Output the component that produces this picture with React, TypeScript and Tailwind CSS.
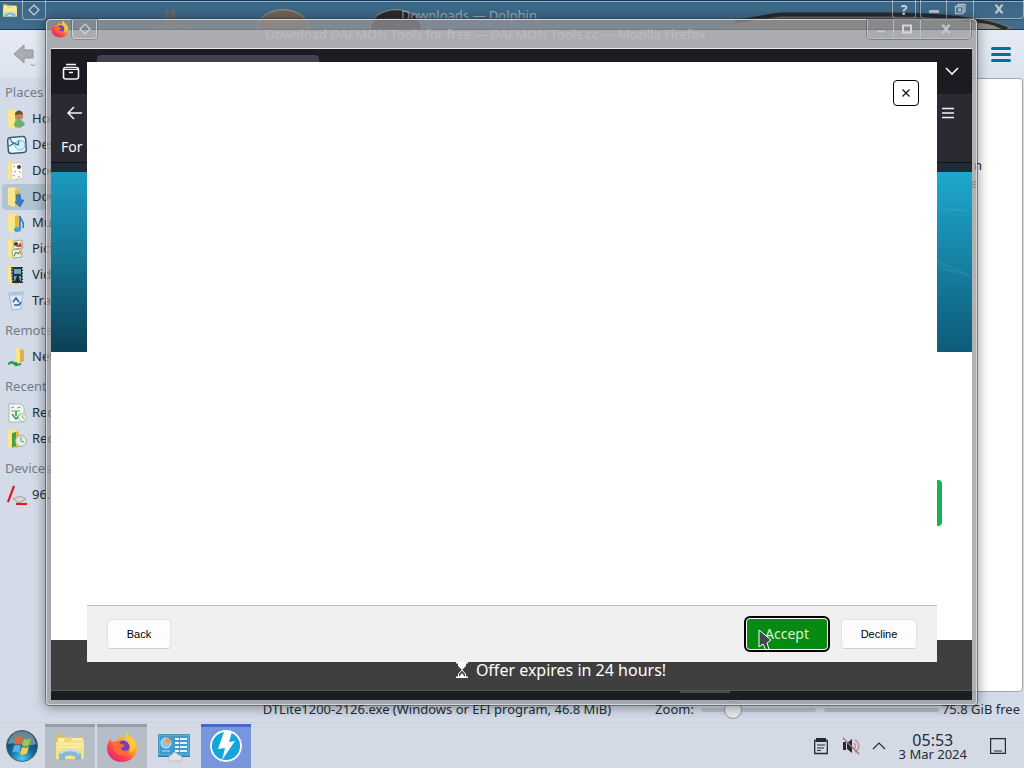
import React from "react";

type PlaceKind =
  | "home" | "desktop" | "documents" | "downloads" | "music" | "pictures"
  | "videos" | "trash" | "network" | "recentFiles" | "recentPlaces" | "disk";

const sections: { title: string; items: { label: string; kind: PlaceKind; active?: boolean }[] }[] = [
  {
    title: "Places",
    items: [
      { label: "Home", kind: "home" },
      { label: "Desktop", kind: "desktop" },
      { label: "Documents", kind: "documents" },
      { label: "Downloads", kind: "downloads", active: true },
      { label: "Music", kind: "music" },
      { label: "Pictures", kind: "pictures" },
      { label: "Videos", kind: "videos" },
      { label: "Trash", kind: "trash" },
    ],
  },
  { title: "Remote", items: [{ label: "Network", kind: "network" }] },
  {
    title: "Recent",
    items: [
      { label: "Recent Files", kind: "recentFiles" },
      { label: "Recent Locations", kind: "recentPlaces" },
    ],
  },
  { title: "Devices", items: [{ label: "96.0 GiB", kind: "disk" }] },
];

function FolderBase() {
  return (
    <g>
      <path d="M1 1h6l2 2v16l-8-1z" fill="#eec95c" />
      <path d="M1 1l4-1 6 2v16l-3 2-7-2z" fill="#fae68c" />
      <path d="M8 3l4-1v16l-4 2z" fill="#e2b84c" />
    </g>
  );
}

function PlaceIcon({ kind }: { kind: PlaceKind }) {
  return (
    <svg viewBox="0 0 20 20" className="h-5 w-5 shrink-0" aria-hidden="true">
      {kind === "home" && (
        <g><FolderBase /><path d="M7 17c0-8 9-8 11-1l-5 3z" fill="#6fae77" /><circle cx="12" cy="7" r="4" fill="#b98a5c" /><path d="M8 6c0-6 8-6 8 0l-2-1z" fill="#6d4b2e" /></g>
      )}
      {kind === "desktop" && (
        <g><rect x="1" y="2" width="18" height="16" rx="3" fill="#edf6fb" stroke="#385d7a" strokeWidth="1.500" transform="rotate(-4 10 10)" /><circle cx="13" cy="10" r="5" fill="#d5edfa" stroke="#7fb4d2" /><path d="M2 2l4 7-4 2M5 7l6 3 1-4" stroke="#2c72a3" fill="none" strokeWidth="1.300" /></g>
      )}
      {kind === "documents" && (
        <g><FolderBase /><path d="M4 2h11l1 15-11 2z" fill="#fbfbfb" stroke="#c9c1b9" strokeWidth=".7" /><circle cx="12" cy="6" r="2" fill="#444" /><path d="M6 5l2 1M7 10l2 1m3-1 2 2M6 14l2 1m3 0 2 1" stroke="#d08c8c" /></g>
      )}
      {kind === "downloads" && (
        <g><FolderBase /><path d="M9 8l4-1 1 6h3l-4 7-5-5 2-1z" fill="#2e83cf" stroke="#1e5d9b" strokeWidth=".6" /></g>
      )}
      {kind === "music" && (
        <g><FolderBase /><path d="M13 3v13M13 3c0 4 5 5 3 12" stroke="#2379bc" strokeWidth="1.500" fill="none" /><ellipse cx="10.500" cy="16.500" rx="3.500" ry="2.500" fill="#45a2dd" /></g>
      )}
      {kind === "pictures" && (
        <g><FolderBase /><path d="M6 2l9-1 1 8-9 1z" fill="#f5efe1" stroke="#927e5e" strokeWidth=".6" /><circle cx="9" cy="5" r="2" fill="#2b4935" /><path d="M9 8l5-5 1 5z" fill="#c74f38" /><path d="M5 11l9-1 1 8-9 1z" fill="#e8f1e0" stroke="#70886b" strokeWidth=".6" /><path d="M7 17l2-4 2 2 2-3" stroke="#486850" fill="none" /><circle cx="14" cy="14" r="1.500" fill="#ddb234" /></g>
      )}
      {kind === "videos" && (
        <g><FolderBase /><path d="M4 2h12v16H5z" fill="#28313d" /><path d="M7 4h7v5H7zM7 11h7v5H7z" fill="#6ea6c4" /><path d="M5 3v15M15.500 3v14" stroke="#d7dfe5" strokeDasharray="1.500 1.500" /><path d="M8 16l3-8 2 8z" fill="#172935" /></g>
      )}
      {kind === "trash" && (
        <g><path d="M2 2l14-1-2 17-9 1z" fill="#dce9f6" stroke="#8fa7bf" strokeWidth=".7" /><path d="M1 3l15-2v3L2 5z" fill="#a8c8e6" /><path d="M6 11l3-4 3 4m-5 3h5l2-3" stroke="#315fa3" strokeWidth="1.600" fill="none" /></g>
      )}
      {kind === "network" && (
        <g><path d="M9 1l4 1v13l-4 2z" fill="#fae68c" /><path d="M13 2l4 1v11l-4 2z" fill="#deb247" /><path d="M1 17l4-2 4 3 5-1M9 15v4" stroke="#249a55" strokeWidth="2.200" fill="none" /></g>
      )}
      {kind === "recentFiles" && (
        <g><path d="M2 1h12l3 3v15H2z" fill="#f4faf4" stroke="#9aaba1" strokeWidth=".8" /><path d="M4 5l3-1m3 1 4-1M4 8h9" stroke="#7c9c80" /><path d="M9 8v5M5 11l4 5 5-5" stroke="#45a45b" strokeWidth="1.800" fill="none" /><circle cx="15.500" cy="14.500" r="4" fill="#edf5ed" stroke="#9caf9f" strokeWidth=".8" /><path d="M15.500 12v3h2" stroke="#7f947f" strokeWidth=".8" fill="none" /></g>
      )}
      {kind === "recentPlaces" && (
        <g><FolderBase /><path d="M5 4l4-1v14l-4 2z" fill="#4c9b45" /><circle cx="14" cy="12" r="5.500" fill="#e1eee0" stroke="#9db3a1" /><path d="M14 8v4l3 1" stroke="#70907a" fill="none" /></g>
      )}
      {kind === "disk" && (
        <g><path d="M6 14l7-3 6 3-7 4z" fill="#d4d6d8" stroke="#888b8f" strokeWidth=".7" /><path d="M7 1L1 17" stroke="#e01824" strokeWidth="2.200" /><path d="M9 19h11" stroke="#e01824" strokeWidth="2.200" /></g>
      )}
    </svg>
  );
}

function FirefoxLogo({ className }: { className: string }) {
  return (
    <svg viewBox="0 0 32 32" className={className} aria-hidden="true">
      <defs>
        <linearGradient id="fx" x1=".85" y1=".1" x2=".2" y2=".9">
          <stop offset="0" stopColor="#ffe443" /><stop offset=".4" stopColor="#ffa02b" />
          <stop offset=".7" stopColor="#ff4a45" /><stop offset="1" stopColor="#e52a6e" />
        </linearGradient>
      </defs>
      <path d="M5 7c0 2 0 3 1 4l4-1c1-2 3-4 6-5 0 2 1 3 3 3 1-3 1-5 2-7 1 4 4 5 6 8l2 1c2 3 2 6 2 8-1 8-7 13-15 13C7 31 1 25 1 17 1 13 3 10 5 7z" fill="url(#fx)" />
      <circle cx="17" cy="16" r="6.500" fill="#6f3fc4" />
      <path d="M7 12c3-2 6-1 8 1l4 1c-1 2-3 2-4 3 0 3 5 4 8 1 0 4-3 6-7 6-6 0-10-6-9-12z" fill="#ff6a35" />
      <path d="M19 8c6 3 7 9 4 14 6-3 8-9 5-13-2-3-5-4-6-7-3 2-2 4-3 6z" fill="#ffc83a" />
    </svg>
  );
}

function FilesLogo({ className }: { className: string }) {
  return (
    <svg viewBox="0 0 32 32" className={className} aria-hidden="true">
      <path d="M2 3l6-1 4 3h17v22H2z" fill="#e0c05a" />
      <path d="M4 6h25v9H4z" fill="#f9efb5" />
      <path d="M11 5h7v3h9v4H9z" fill="#ecd27c" />
      <path d="M2 10h13l3-2h12v19H2z" fill="#f4e28b" />
      <path d="M4 12h24M3 15h27" stroke="#fff5c0" />
      <path d="M5 28v-5c0-7 22-7 22 0v5h-6v-3c0-2-10-2-10 0v3z" fill="#86b9cf" />
      <path d="M7 22c1-5 17-5 18 0" stroke="#c3e2ed" strokeWidth="2" fill="none" />
    </svg>
  );
}

function StartLogo() {
  return (
    <svg viewBox="0 0 32 32" className="h-8 w-8" aria-hidden="true">
      <defs>
        <radialGradient id="orb" cx=".5" cy=".9" r=".85">
          <stop offset="0" stopColor="#45d0f4" /><stop offset=".45" stopColor="#13689b" /><stop offset="1" stopColor="#183953" />
        </radialGradient>
      </defs>
      <circle cx="16" cy="16" r="15.500" fill="url(#orb)" stroke="#4e6570" />
      <path d="M2 14C4-3 28-3 30 14 20 18 11 11 2 14z" fill="#b8ced3" opacity=".5" />
      <path d="M10 8c3-2 5-1 7 0l-2 7c-2-1-4-2-7 0z" fill="#ee6531" />
      <path d="M18 9c3 1 5 1 7-1l-2 7c-2 2-4 2-7 1z" fill="#9cc945" />
      <path d="M8 16c3-2 5-1 7 0l-2 7c-2-1-4-2-7 0z" fill="#5cb0e4" />
      <path d="M16 17c3 1 5 1 7-1l-2 7c-2 2-4 2-7 1z" fill="#f8cd47" />
    </svg>
  );
}

function SettingsLogo() {
  return (
    <svg viewBox="0 0 34 32" className="h-8 w-9" aria-hidden="true">
      <rect x="1" y="4" width="32" height="23" rx="1" fill="#287cad" />
      <rect x="2" y="5" width="30" height="20" fill="#3f9bcd" stroke="#8cc8e4" strokeWidth=".7" />
      <circle cx="9" cy="13" r="5" fill="#8cc6e5" stroke="#dceef7" />
      <path d="M9 13V7a6 6 0 0 1 5 6z" fill="#f49a4a" />
      <path d="M18 9h4m1 0h7m-12 4h4m1 0h7m-12 4h4m1 0h7m-12 4h4m1 0h7" stroke="#e2f3fb" strokeWidth="2" />
      <path d="M5 21h8" stroke="#b9e1f1" />
      <path d="M12 30c-2-4 2-5 3-5 1-4 5-3 6 0 4 0 5 3 3 6H13z" fill="#e2e2e3" stroke="#a3a9ad" strokeWidth=".6" />
    </svg>
  );
}

function BoltLogo() {
  return (
    <svg viewBox="0 0 32 32" className="h-8 w-8" aria-hidden="true">
      <circle cx="16" cy="16" r="15" fill="#14a5dd" stroke="#fff" strokeWidth="1.800" />
      <path d="M14 2h8l-3 10 6-1-13 19 3-12-7 1z" fill="#fff" />
    </svg>
  );
}

function Diamond() {
  return (
    <svg viewBox="0 0 12 12" className="h-3 w-3" aria-hidden="true">
      <path d="M6 1l5 5-5 5-5-5z" fill="none" stroke="#cdd4da" strokeWidth="1.200" />
    </svg>
  );
}

const frameButton = "flex items-center justify-center border-r border-[#c2cbd3]/70 last:border-r-0";

function WindowButtons({ restore }: { restore?: boolean }) {
  return (
    <div className="flex h-[19px] w-[104px] rounded-b border border-t-0 border-[#c2cbd3]/70 shadow-[0_0_0_1px_rgba(30,45,60,0.35)]">
      <button aria-label="Minimize" className={`${frameButton} w-[26px]`}>
        <svg viewBox="0 0 12 12" className="mt-1 h-3 w-3"><path d="M1 5h10v3H1z" fill="#c3c9ce" stroke="#74808a" strokeWidth=".5" /></svg>
      </button>
      <button aria-label={restore ? "Restore" : "Maximize"} className={`${frameButton} w-[27px]`}>
        <svg viewBox="0 0 12 12" className="h-3 w-3">
          {restore ? (
            <path d="M4 3V1.500h7v7H9.500M1.500 3.500h7.500v7H1.500zM4.500 6h2v2h-2z" fill="none" stroke="#b5c1cb" strokeWidth="1.300" />
          ) : (
            <path d="M2 2.500h8v7H2z" fill="none" stroke="#d3d6d8" strokeWidth="2" />
          )}
        </svg>
      </button>
      <button aria-label="Close" className={`${frameButton} flex-1`}>
        <svg viewBox="0 0 12 12" className="h-3 w-3"><path d="M2 2h2l2 3 2-3h2L7 6l3 4H8L6 7l-2 3H2l3-4z" fill="#b9c0c5" stroke="#cdd2d6" strokeWidth=".8" /></svg>
      </button>
    </div>
  );
}

function FileManager() {
  return (
    <section className="flex flex-1 flex-col bg-[#d3dbe8] text-[13px] text-[#232b35]">
      <header className="relative flex h-[30px] items-start justify-between overflow-hidden border-b border-[#1b3856] bg-gradient-to-b from-[#3b6888] to-[#426c8c] shadow-[inset_0_1px_0_#16375b,inset_0_2px_0_#8fb0c6]">
        <svg viewBox="0 0 1024 30" className="absolute inset-0 h-full w-full" preserveAspectRatio="none" aria-hidden="true">
          <ellipse cx="283" cy="30" rx="26" ry="20" fill="#75655a" stroke="#a29688" />
          <ellipse cx="396" cy="30" rx="26" ry="20" fill="#2b2b30" stroke="#9a9184" />
          <path d="M167 28V10m6 18V10m-22 19c10-4 30-4 40 0" stroke="#75695a" strokeWidth="3" fill="none" />
          <path d="M712 30c20-4 50-13 75-15 60-3 150 0 180 2 25 2 40 8 49 13z" fill="#6d6b68" />
          <path d="M735 22c20-2 30-5 45-7h110c50 0 90 4 117 15" stroke="#272b31" strokeWidth="4" fill="none" />
          <path d="M978 24c9 0 17 2 23 6h-23z" fill="#8d8780" />
        </svg>
        <div className="relative flex gap-1">
          <FilesLogo className="mt-[3px] ml-0.5 h-4 w-4" />
          <button aria-label="Window menu" className="flex h-5 w-[24px] items-center justify-center rounded-b border border-t-0 border-[#c2cbd3]/70">
            <Diamond />
          </button>
        </div>
        <h1 className="absolute inset-x-0 top-[5px] pr-[86px] text-center text-[13px] leading-5 text-[#c4cbd2]/70">Downloads — Dolphin</h1>
        <div className="relative flex gap-1">
          <button aria-label="Help" className="h-[19px] w-[24px] rounded-b border border-t-0 border-[#c2cbd3]/70 text-[14px] leading-5 font-bold text-[#ccd4db]">?</button>
          <WindowButtons restore />
        </div>
      </header>
      <div className="flex h-[48px] items-center justify-between bg-gradient-to-b from-[#e6ebf5] to-[#dce3ef] pr-[13px] pl-3">
        <button aria-label="Back">
          <svg viewBox="0 0 26 28" className="h-7 w-[26px]">
            <path d="M2 14L12 5v5h9v8h-9v5z" fill="#a8adb1" stroke="#8f9499" />
            <path d="M19 24l2 2 2-2" fill="none" stroke="#969ba2" />
          </svg>
        </button>
        <button aria-label="Open menu" className="flex flex-col gap-[3px]">
          <span className="h-[3px] w-5 rounded bg-[#0b6c9f]" />
          <span className="h-[3px] w-5 rounded bg-[#0b6c9f]" />
          <span className="h-[3px] w-5 rounded bg-[#0b6c9f]" />
        </button>
      </div>
      <div className="flex flex-1">
        <nav className="-mt-0.5 w-[150px]">
          {sections.map((s) => (
            <div key={s.title}>
              <h2 className="flex h-[30px] items-center pt-1 pl-[5px] text-[#737c87]">{s.title}</h2>
              <ul>
                {s.items.map((it) => (
                  <li key={it.label} className={it.active ? "ml-0.5 rounded-l bg-[#b3c3cf]" : "ml-0.5"}>
                    <a href="#" className="flex h-[26px] items-center gap-[5px] pl-[5px] whitespace-nowrap">
                      <PlaceIcon kind={it.kind} />
                      {it.label}
                    </a>
                  </li>
                ))}
              </ul>
            </div>
          ))}
        </nav>
        <main className="mr-px flex flex-1 flex-col items-end rounded-sm border border-[#a1a8b1] bg-white pt-[77px] pr-[40px] leading-[18px]">
          <p>n</p>
          <p className="pr-1 text-[#777]">e</p>
        </main>
      </div>
      <footer className="flex h-[30px] items-center justify-end pt-1.5 pr-1">
        <p className="mr-11 whitespace-nowrap">DTLite1200-2126.exe (Windows or EFI program, 46.8 MiB)</p>
        <label htmlFor="zoom" className="mr-[7px]">Zoom:</label>
        <input
          id="zoom"
          type="range"
          defaultValue={24}
          className="mr-2 h-5 w-[115px] appearance-none bg-transparent [&::-webkit-slider-runnable-track]:h-1 [&::-webkit-slider-runnable-track]:rounded [&::-webkit-slider-runnable-track]:bg-[#b8c0cb] [&::-webkit-slider-thumb]:-mt-[7px] [&::-webkit-slider-thumb]:h-[18px] [&::-webkit-slider-thumb]:w-[18px] [&::-webkit-slider-thumb]:appearance-none [&::-webkit-slider-thumb]:rounded-full [&::-webkit-slider-thumb]:border [&::-webkit-slider-thumb]:border-[#8d949e] [&::-webkit-slider-thumb]:bg-[#e6e8eb]"
        />
        <div className="mr-[3px] h-1 w-[115px] rounded bg-[#b4bcc8]" />
        <span className="whitespace-nowrap">75.8 GiB free</span>
      </footer>
    </section>
  );
}

function Browser() {
  return (
    <section className="absolute top-[19px] right-[47px] bottom-[63px] left-[46px] flex flex-col rounded border border-[#d4d6d9] bg-[rgba(150,148,149,0.72)] px-1 pb-1 shadow-[0_0_0_1px_rgba(50,58,68,0.55),0_1px_12px_2px_rgba(0,0,0,0.35)]">
      <header className="relative flex h-[28px] shrink-0 items-start justify-between">
        <div className="flex gap-[3px]">
          <FirefoxLogo className="h-[18px] w-[18px]" />
          <button aria-label="Window menu" className="flex h-[19px] w-[25px] items-center justify-center rounded-b border border-t-0 border-[#d6dadd]/80 shadow-[0_0_0_1px_rgba(50,58,68,0.3)]">
            <Diamond />
          </button>
        </div>
        <h2 className="pointer-events-none absolute inset-x-0 top-1 pr-[52px] text-center text-[13px] leading-5 text-[#c4c6c8]/60">
          Download DAEMON Tools for free — DAEMON Tools.cc — Mozilla Firefox
        </h2>
        <div className="pr-px"><WindowButtons /></div>
      </header>
      <div className="flex flex-1 flex-col border-t border-[#e9eaec] bg-white">
        <div className="flex h-[45px] items-center justify-between bg-[#1c1b22] pr-[13px] pl-[11px] text-[#f4f4f6]">
          <button aria-label="Recent browsing">
            <svg viewBox="0 0 18 18" className="h-[18px] w-[18px]" fill="none" stroke="currentColor" strokeWidth="1.600">
              <path d="M4 1.500h10M1.500 7c0-1.500 1-2.500 2.500-2.500h10c1.500 0 2.500 1 2.500 2.500v7c0 1.500-1 2-2.500 2H4c-1.500 0-2.500-.5-2.500-2zM7 9.500h4" />
              <path d="M2 6.500h14" strokeWidth="1" />
            </svg>
          </button>
          <div className="mt-1 mr-auto ml-[17px] h-[37px] w-[222px] rounded bg-[#42414d]" />
          <button aria-label="List all tabs">
            <svg viewBox="0 0 14 14" className="h-[14px] w-[14px]" fill="none" stroke="currentColor" strokeWidth="1.600"><path d="M1 3l6 6 6-6" /></svg>
          </button>
        </div>
        <div className="flex h-[69px] flex-col border-b border-[#101015] bg-[#2b2a33] text-[#f4f4f6]">
          <div className="flex h-[38px] items-center justify-between pr-[17px] pl-4">
            <button aria-label="Go back">
              <svg viewBox="0 0 16 14" className="h-[14px] w-4" fill="none" stroke="currentColor" strokeWidth="1.500"><path d="M7 1L1 7l6 6M1 7h14" /></svg>
            </button>
            <button aria-label="Application menu">
              <svg viewBox="0 0 14 12" className="h-3 w-[14px]" stroke="currentColor" strokeWidth="1.400"><path d="M1 1.500h12M1 6h12M1 10.500h12" /></svg>
            </button>
          </div>
          <p className="pl-[10px] text-[14px] leading-[30px]">For</p>
        </div>
        <div className="h-[9px] bg-[#1e2c37]" />
        <div className="flex h-[180px] justify-between overflow-hidden bg-gradient-to-b from-[#1ea9cf] to-[#0e5b79]">
          <div className="h-full w-9 bg-gradient-to-b from-[#1b9ac0] via-[#15718f] to-[#0c4156]" />
          <svg viewBox="0 0 36 180" className="h-full w-9" fill="none" stroke="#5fc5da" strokeOpacity=".14" strokeWidth="2" aria-hidden="true">
            <path d="M1 35c12 6 20-1 34 6M2 89c11 6 22 8 33 16M3 94c9 7 20 4 30 10" />
          </svg>
        </div>
        <div className="flex flex-1 items-center justify-end pt-[13px] pr-[30px]">
          <div className="h-[46px] w-40 rounded bg-[#17b254]" />
        </div>
        <div className="flex h-[51px] items-center justify-center gap-2 border-b border-[#555] bg-[#3f3f3f] pt-[10px] pl-[99px] text-[16px] text-white">
          <svg viewBox="0 0 12 16" className="h-4 w-3" aria-hidden="true">
            <path d="M0 .7h12M0 15.300h12" stroke="#fff" strokeWidth="1.400" />
            <path d="M2 1h8v3L6 8 2 4z" fill="#fff" />
            <path d="M2.500 15v-3L6 8l3.500 4v3" fill="none" stroke="#fff" />
            <path d="M3 15l3-4 3 4z" fill="#fff" />
          </svg>
          <p>Offer expires in 24 hours!</p>
        </div>
        <div className="flex h-[9px] bg-[#1b1e21] pl-[629px]">
          <div className="h-0.5 w-[50px] bg-[#4b4d50]" />
        </div>
      </div>
    </section>
  );
}

function Installer() {
  return (
    <section role="dialog" aria-label="Installer" className="absolute top-[62px] right-[87px] bottom-[106px] left-[87px] flex flex-col bg-white font-['Liberation_Sans',sans-serif] text-[11px] text-black">
      <div className="flex flex-1 items-start justify-end pt-[18px] pr-[18px]">
        <button aria-label="Close installer" className="flex h-[26px] w-[26px] items-center justify-center rounded border border-black bg-white">
          <svg viewBox="0 0 8 8" className="h-2 w-2"><path d="M.5.5l7 7m0-7l-7 7" stroke="#111" strokeWidth="1.200" /></svg>
        </button>
      </div>
      <footer className="flex h-[57px] items-center border-t border-[#bdbdbd] bg-[#f0f0f0] px-5">
        <button className="mr-auto h-[30px] w-[64px] rounded border border-[#e2e2e2] border-b-[#cfcfcf] bg-[#fdfdfd]">Back</button>
        <button className="mr-[11px] h-9 w-[86px] rounded-md border-2 border-black bg-[#078a12] font-['Noto_Sans',sans-serif] text-[14px] leading-4 text-[#d5f5d5] shadow-[inset_0_0_0_1px_#fff]">Accept</button>
        <button className="h-[30px] w-[76px] rounded border border-[#e2e2e2] border-b-[#cfcfcf] bg-[#fdfdfd]">Decline</button>
      </footer>
      <svg viewBox="0 0 14 22" className="absolute right-[165px] bottom-[11px] h-[22px] w-[14px]" aria-hidden="true">
        <path d="M1 1v17l4-3 3 6 3-1-2-6 4-3z" fill="#42484a" stroke="#fff" />
      </svg>
    </section>
  );
}

function Taskbar() {
  return (
    <footer className="flex h-[46px] items-stretch gap-0.5 border-t border-[#cbd2dd] bg-[#d3dae6] pt-px text-[#232b35]">
      <button aria-label="Start" className="flex w-[43px] items-center justify-center"><StartLogo /></button>
      <button aria-label="Files" className="flex w-[50px] items-center justify-center border-t-[3px] border-[#979da8] bg-[#b7bdc7]"><FilesLogo className="h-8 w-8" /></button>
      <button aria-label="Firefox" className="flex w-[50px] items-center justify-center border-t-[3px] border-[#979da8] bg-[#b7bdc7] pb-0.5"><FirefoxLogo className="h-8 w-8" /></button>
      <button aria-label="System settings" className="flex w-[50px] items-center justify-center"><SettingsLogo /></button>
      <button aria-label="DAEMON Tools" className="flex w-[50px] items-center justify-center border-t-[3px] border-[#4668c9] bg-[#7796dc] pb-[3px]"><BoltLogo /></button>
      <div className="ml-auto flex items-center pr-[18px]">
        <button aria-label="Clipboard" className="mr-[13px]">
          <svg viewBox="0 0 16 18" className="h-[18px] w-4"><path d="M1.700 3.500h12.600v13H1.700z" fill="none" stroke="#222a33" strokeWidth="1.300" /><path d="M3 1h10v4H3z" fill="#222a33" /><path d="M4 8h8M4 11h7M4 13.500h4" stroke="#222a33" strokeWidth="1.200" /></svg>
        </button>
        <button aria-label="Volume muted" className="mr-3">
          <svg viewBox="0 0 18 18" className="h-[18px] w-[18px]"><path d="M1 5h3v8H1zM5 6l5-4v14l-5-4z" fill="#222a33" /><path d="M12 6c2 2 2 4 0 6M13 3c5 3 5 9 0 12" fill="none" stroke="#c3949e" strokeWidth="1.500" /><path d="M1 1l16 16" stroke="#b76472" strokeWidth="1.300" /></svg>
        </button>
        <button aria-label="Show hidden icons" className="mr-[13px]">
          <svg viewBox="0 0 14 14" className="h-[14px] w-[14px]"><path d="M1 10l6-6 6 6" fill="none" stroke="#222a33" strokeWidth="1.200" /></svg>
        </button>
        <time dateTime="2024-03-03T05:53" className="mr-[23px] flex flex-col items-center whitespace-nowrap">
          <span className="text-[16px] leading-4">05:53</span>
          <span className="text-[13px] leading-[13px]">3 Mar 2024</span>
        </time>
        <button aria-label="Show desktop">
          <svg viewBox="0 0 16 16" className="h-4 w-4"><path d="M.6.6h14.800v14.800H.6zM4 13h8" fill="none" stroke="#222a33" strokeWidth="1.200" /></svg>
        </button>
      </div>
    </footer>
  );
}

export default function App() {
  return (
    <div className="relative flex min-h-screen flex-col overflow-hidden font-['Noto_Sans',sans-serif]">
      <FileManager />
      <Taskbar />
      <Browser />
      <Installer />
    </div>
  );
}
